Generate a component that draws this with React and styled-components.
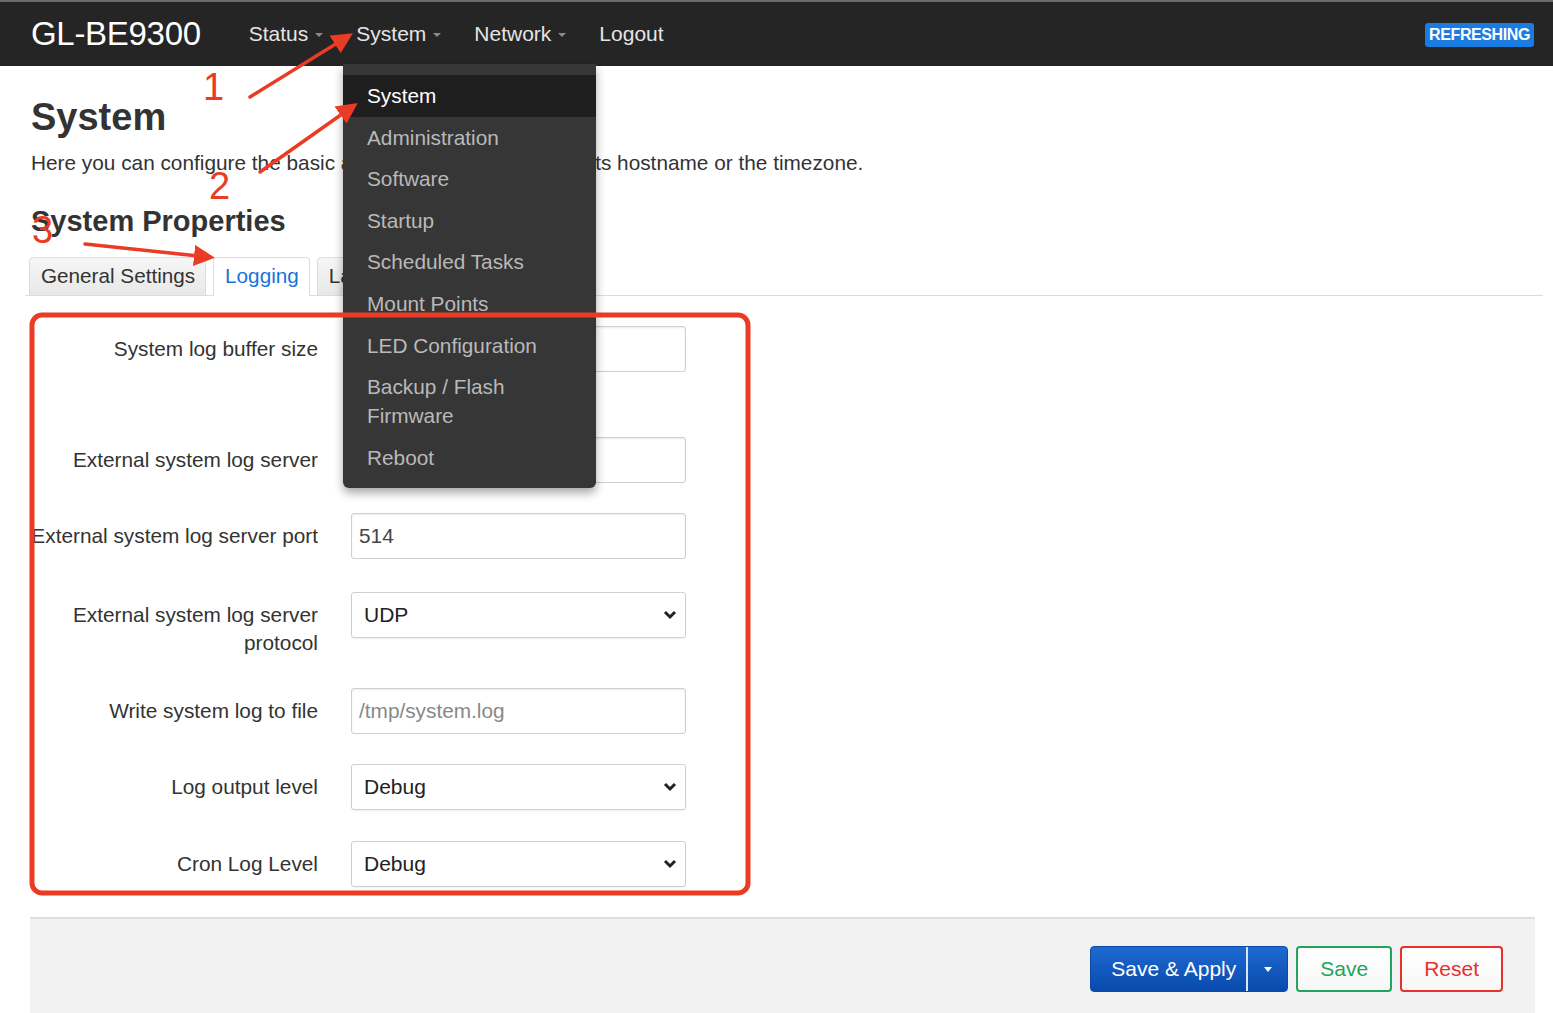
import React from "react";
import styled, { createGlobalStyle } from "styled-components";

const GlobalStyle = createGlobalStyle`
  html, body {
    margin: 0;
    padding: 0;
    background: #fff;
    font-family: "Liberation Sans", Arial, sans-serif;
    color: #333;
  }
  * { box-sizing: border-box; }
`;

const Page = styled.div`
  position: relative;
  width: 1553px;
  min-height: 1013px;
  overflow: hidden;
`;

const Header = styled.header`
  height: 66px;
  background: #252525;
  border-top: 2px solid #6a6a6a;
  display: flex;
  align-items: center;
  padding: 0 19px 0 31px;
`;

const Brand = styled.a`
  font-size: 33px;
  color: #fff;
  letter-spacing: -0.3px;
  margin-right: 48px;
  text-decoration: none;
`;

const Nav = styled.ul`
  list-style: none;
  margin: 0;
  padding: 0;
  display: flex;
  gap: 33px;
  flex: 1;
`;

const NavItem = styled.li`
  position: relative;
  font-size: 21px;
  color: #e4e4e4;
  display: flex;
  align-items: center;
  gap: 7px;
`;

const Caret = styled.span`
  width: 0;
  height: 0;
  border-left: 4px solid transparent;
  border-right: 4px solid transparent;
  border-top: 4px solid #8a8a8a;
  margin-top: 2px;
`;

const Badge = styled.span`
  background: #1a7be0;
  color: #fff;
  font-weight: bold;
  font-size: 16px;
  letter-spacing: -0.4px;
  padding: 3px 4px;
  border-radius: 3px;
  margin-top: 2px;
`;

const Dropdown = styled.ul`
  position: absolute;
  top: 64px;
  left: 343px;
  width: 253px;
  margin: 0;
  padding: 11px 0 10px;
  list-style: none;
  background: #363636;
  border-radius: 0 0 6px 6px;
  box-shadow: 0 5px 10px rgba(0, 0, 0, 0.35);
  z-index: 5;
`;

const DropItem = styled.li`
  font-size: 20.8px;
  line-height: 29px;
  padding: 6px 40px 6.6px 24px;
  color: ${(p) => (p.$active ? "#fff" : "#b9b9b9")};
  background: ${(p) => (p.$active ? "#1e1e1e" : "transparent")};
`;

const Main = styled.main`
  padding: 30px 10px 0 31px;
`;

const Title = styled.h1`
  font-size: 38px;
  font-weight: bold;
  margin: 0 0 12px;
  color: #333;
`;

const Desc = styled.p`
  font-size: 20.8px;
  margin: 0 0 30px;
  color: #333;
`;

const SubTitle = styled.h2`
  font-size: 29px;
  font-weight: bold;
  margin: 0 0 19px;
  color: #333;
`;

const Tabs = styled.ul`
  list-style: none;
  margin: 0 0 0 -6px;
  padding: 0 0 0 4px;
  display: flex;
  gap: 7px;
  border-bottom: 1px solid #dcdcdc;
`;

const Tab = styled.li`
  font-size: 20.7px;
  padding: 6px 10px 7px 11px;
  margin-bottom: -1px;
  border: 1px solid #dcdcdc;
  border-bottom-color: ${(p) => (p.$active ? "#fff" : "#dcdcdc")};
  border-radius: 4px 4px 0 0;
  background: ${(p) => (p.$active ? "#fff" : "linear-gradient(#f6f6f6, #e8e8e8)")};
  color: ${(p) => (p.$active ? "#1a73d9" : "#333")};
`;

const Form = styled.div`
  padding: 30px 0 0;
  width: 700px;
`;

const Row = styled.div`
  display: grid;
  grid-template-columns: 287px 335px;
  column-gap: 33px;
  margin-bottom: ${(p) => p.$gap ?? 31}px;
`;

const Label = styled.label`
  font-size: 20.8px;
  line-height: 28px;
  padding-top: 9px;
  text-align: right;
  color: #333;
  white-space: ${(p) => (p.$nowrap ? "nowrap" : "normal")};
  direction: ${(p) => (p.$nowrap ? "rtl" : "ltr")};
  overflow: hidden;
`;

const Input = styled.input`
  height: 46px;
  border: 1px solid #cfcfcf;
  border-radius: 3px;
  box-shadow: inset 0 1px 2px rgba(0, 0, 0, 0.08);
  font-family: inherit;
  font-size: 20.8px;
  padding: 0 7px;
  color: #444;
  &::placeholder { color: #888; }
`;

const SelectBox = styled.div`
  height: 46px;
  border: 1px solid #cfcfcf;
  border-radius: 3px;
  box-shadow: 0 1px 2px rgba(0, 0, 0, 0.06);
  display: flex;
  align-items: center;
  justify-content: space-between;
  padding: 0 8px 0 12px;
  font-size: 21px;
  color: #222;
`;

const Footer = styled.div`
  margin: 30px 18px 0 30px;
  background: #f2f2f2;
  border-top: 2px solid #dedede;
  padding: 27px 32px 30px;
  display: flex;
  justify-content: flex-end;
  gap: 8px;
`;

const SplitBtn = styled.div`
  display: flex;
  height: 46px;
  border-radius: 4px;
  background: linear-gradient(#1d6ad2, #0a4aac);
  border: 1px solid #0c4aa4;
  color: #fff;
  font-size: 21px;
`;

const SplitMain = styled.span`
  display: flex;
  align-items: center;
  padding: 0 10px 0 20px;
  border-right: 2px solid #d9e6f8;
`;

const SplitCaret = styled.span`
  width: 39px;
  display: flex;
  align-items: center;
  justify-content: center;
  &::after {
    content: "";
    border-left: 4px solid transparent;
    border-right: 4px solid transparent;
    border-top: 5px solid #fff;
  }
`;

const OutlineBtn = styled.button`
  height: 46px;
  padding: 0 ${(p) => p.$pad}px;
  background: linear-gradient(#fff, #f7f7f7);
  border: 2px solid ${(p) => p.$color};
  border-radius: 4px;
  color: ${(p) => p.$color};
  font-family: inherit;
  font-size: 21px;
`;

const Annotations = styled.svg`
  position: absolute;
  top: 0;
  left: 0;
  pointer-events: none;
  z-index: 10;
`;

const Chevron = () => (
  <svg width="14" height="10" viewBox="0 0 14 10">
    <path d="M2 2 L7 7 L12 2" fill="none" stroke="#222" strokeWidth="3" />
  </svg>
);

const menu = [
  "System",
  "Administration",
  "Software",
  "Startup",
  "Scheduled Tasks",
  "Mount Points",
  "LED Configuration",
  "Backup / Flash Firmware",
  "Reboot",
];

const RED = "#ea3b24";

export default function App() {
  return (
    <Page>
      <GlobalStyle />
      <Header>
        <Brand>GL-BE9300</Brand>
        <Nav>
          <NavItem>Status <Caret /></NavItem>
          <NavItem>System <Caret /></NavItem>
          <NavItem>Network <Caret /></NavItem>
          <NavItem>Logout</NavItem>
        </Nav>
        <Badge>REFRESHING</Badge>
      </Header>

      <Dropdown>
        {menu.map((m, i) => (
          <DropItem key={m} $active={i === 0}>{m}</DropItem>
        ))}
      </Dropdown>

      <Main>
        <Title>System</Title>
        <Desc>
          Here you can configure the basic aspects of your device like its hostname or the timezone.
        </Desc>
        <SubTitle>System Properties</SubTitle>
        <Tabs>
          <Tab>General Settings</Tab>
          <Tab $active>Logging</Tab>
          <Tab>Language and Style</Tab>
        </Tabs>

        <Form>
          <Row $gap={65}>
            <Label>System log buffer size</Label>
            <Input defaultValue="" />
          </Row>
          <Row $gap={30}>
            <Label>External system log server</Label>
            <Input defaultValue="" />
          </Row>
          <Row $gap={33}>
            <Label $nowrap>External system log server port</Label>
            <Input defaultValue="514" />
          </Row>
          <Row $gap={31}>
            <Label>External system log server protocol</Label>
            <SelectBox>UDP <Chevron /></SelectBox>
          </Row>
          <Row $gap={30}>
            <Label>Write system log to file</Label>
            <Input placeholder="/tmp/system.log" />
          </Row>
          <Row $gap={31}>
            <Label>Log output level</Label>
            <SelectBox>Debug <Chevron /></SelectBox>
          </Row>
          <Row $gap={0}>
            <Label>Cron Log Level</Label>
            <SelectBox>Debug <Chevron /></SelectBox>
          </Row>
        </Form>
      </Main>

      <Footer>
        <SplitBtn>
          <SplitMain>Save &amp; Apply</SplitMain>
          <SplitCaret />
        </SplitBtn>
        <OutlineBtn $color="#22a45a" $pad={22}>Save</OutlineBtn>
        <OutlineBtn $color="#e8312a" $pad={22}>Reset</OutlineBtn>
      </Footer>

      <Annotations width="1553" height="1013" viewBox="0 0 1553 1013">
        <defs>
          <marker id="ah" markerWidth="6" markerHeight="6" refX="4" refY="3" orient="auto" markerUnits="strokeWidth">
            <path d="M0 0 L6 3 L0 6 Z" fill={RED} />
          </marker>
        </defs>
        <g stroke={RED} strokeWidth="3.5" fill="none" strokeLinecap="round">
          <line x1="250" y1="97" x2="347" y2="37" markerEnd="url(#ah)" />
          <line x1="260" y1="172" x2="352" y2="107" markerEnd="url(#ah)" />
          <line x1="85" y1="244" x2="208" y2="257" markerEnd="url(#ah)" />
        </g>
        <g fill={RED} fontFamily="Liberation Sans, Arial, sans-serif" fontSize="38">
          <text x="203" y="100">1</text>
          <text x="209" y="199">2</text>
          <text x="32" y="243">3</text>
        </g>
        <rect x="32" y="315" width="716" height="578" rx="10" ry="10" fill="none" stroke={RED} strokeWidth="5" />
      </Annotations>
    </Page>
  );
}
